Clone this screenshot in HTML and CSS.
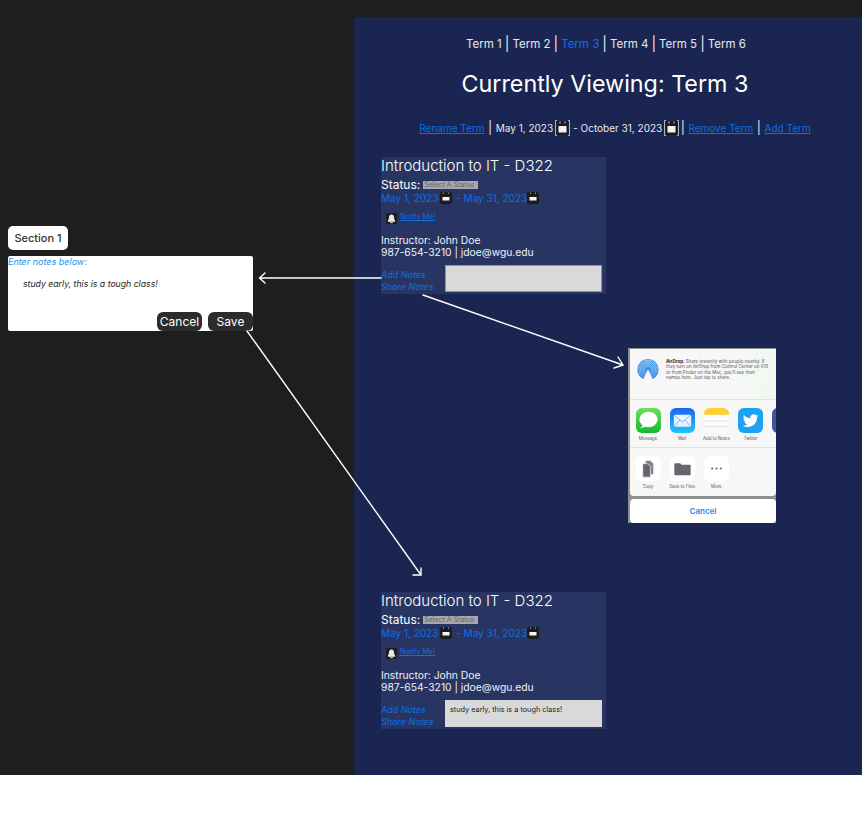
FILE: index.html
```html
<!DOCTYPE html>
<html lang="en">
<head>
<meta charset="utf-8">
<title>Term planner wireframes</title>
<link rel="stylesheet" href="styles.css">
</head>
<body>
<svg width="0" height="0" class="defs">
  <symbol id="cal" viewBox="0 0 15 16">
    <path d="M2 .5H.5v15H2M13 .5h1.500v15H13" fill="none" stroke="#d8dbe6" stroke-width=".8"/>
    <rect x="1.500" y="1" width="12" height="14" rx="1.500" fill="#1c1c1c"/>
    <rect x="3.500" y="6" width="8" height="6.500" fill="#f2f2f2"/>
    <path d="M5 1.500v2M10 1.500v2" stroke="#cfcfcf" stroke-width="1"/>
  </symbol>
  <symbol id="calsm" viewBox="0 0 12 12">
    <rect width="12" height="12" rx="2" fill="#1c1c1c"/>
    <rect x="2.500" y="5" width="7" height="3.500" fill="#f4f4f4"/>
    <path d="M3.500 .5v1.500M8.500 .5v1.500" stroke="#aaa" stroke-width=".8"/>
  </symbol>
  <symbol id="bell" viewBox="0 0 12 12">
    <rect width="12" height="12" rx="1.500" fill="#1c1c1c"/>
    <path d="M6 1.500c-2 0-2.800 1.500-2.800 3.300 0 2-.9 2.700-1.200 3.700v1h8v-1c-.3-1-1.200-1.700-1.200-3.700C8.800 3 8 1.500 6 1.500z" fill="#e9e9e9"/>
    <rect x="4.500" y="10" width="3" height="1" fill="#e9e9e9"/>
  </symbol>
</svg>

<main class="canvas">
  <section class="notes">
    <div class="section-tag">Section 1</div>
    <div class="notes-box">
      <p class="notes-label">Enter notes below:</p>
      <p class="notes-text">study early, this is a tough class!</p>
      <div class="notes-actions">
        <button class="dark-btn">Cancel</button>
        <button class="dark-btn">Save</button>
      </div>
    </div>
  </section>

  <section class="frame">
    <nav class="term-nav">
      <span>Term 1</span><i>|</i><span>Term 2</span><i>|</i><span class="active">Term 3</span><i>|</i><span>Term 4</span><i>|</i><span>Term 5</span><i>|</i><span>Term 6</span>
    </nav>
    <h1 class="viewing">Currently Viewing: Term 3</h1>
    <div class="term-meta">
      <a href="#">Rename Term</a><i>|</i><span>May 1, 2023</span><svg class="cal"><use href="#cal"/></svg><span class="dash">- October 31, 2023</span><svg class="cal"><use href="#cal"/></svg><i>|</i><a href="#">Remove Term</a><i>|</i><a href="#">Add Term</a>
    </div>

    <article class="card card-top">
      <h2>Introduction to IT - D322</h2>
      <div class="status">Status: <span class="select">Select A Status</span></div>
      <div class="dates">May 1, 2023<svg class="calsm"><use href="#calsm"/></svg> - May 31, 2023<svg class="calsm"><use href="#calsm"/></svg></div>
      <div class="notify"><svg class="bell"><use href="#bell"/></svg><a href="#">Notify Me!</a></div>
      <div class="instructor">Instructor: John Doe<br>987-654-3210 | jdoe@wgu.edu</div>
      <div class="card-foot">
        <div class="foot-links"><em>Add Notes</em><em>Share Notes</em></div>
        <div class="note-area"></div>
      </div>
    </article>

    <article class="card card-bottom">
      <h2>Introduction to IT - D322</h2>
      <div class="status">Status: <span class="select">Select A Status</span></div>
      <div class="dates">May 1, 2023<svg class="calsm"><use href="#calsm"/></svg> - May 31, 2023<svg class="calsm"><use href="#calsm"/></svg></div>
      <div class="notify"><svg class="bell"><use href="#bell"/></svg><a href="#">Notify Me!</a></div>
      <div class="instructor">Instructor: John Doe<br>987-654-3210 | jdoe@wgu.edu</div>
      <div class="card-foot">
        <div class="foot-links"><em>Add Notes</em><em>Share Notes</em></div>
        <div class="note-area flush">study early, this is a tough class!</div>
      </div>
    </article>
  </section>

  <aside class="share">
    <div class="sheet">
      <div class="airdrop">
        <svg class="air-icon" viewBox="0 0 26 26">
          <defs>
            <linearGradient id="ag" x1="0" y1="0" x2="0" y2="1"><stop offset="0" stop-color="#4aa8f0"/><stop offset="1" stop-color="#1f74dc"/></linearGradient>
          </defs>
          <circle cx="13" cy="12.500" r="12.500" fill="url(#ag)"/>
          <g fill="none" stroke="#dff0fd" stroke-width=".5">
            <circle cx="13" cy="12.500" r="10.800"/>
            <circle cx="13" cy="12.500" r="9.100"/>
            <circle cx="13" cy="12.500" r="7.400"/>
            <circle cx="13" cy="12.500" r="5.700"/>
            <circle cx="13" cy="12.500" r="4"/>
          </g>
          <path d="M13 12L6.500 26h13z" fill="#f7f7f7"/>
        </svg>
        <p class="air-copy"><b>AirDrop.</b> Share instantly with people nearby. If<br>they turn on AirDrop from Control Center on iOS<br>or from Finder on the Mac, you'll see their<br>names here. Just tap to share.</p>
      </div>
      <div class="apps">
        <div class="app"><svg viewBox="0 0 26 26"><defs><linearGradient id="mg" x1="0" y1="0" x2="0" y2="1"><stop offset="0" stop-color="#6be05f"/><stop offset="1" stop-color="#14b82b"/></linearGradient></defs><rect width="26" height="26" rx="6" fill="url(#mg)"/><ellipse cx="13" cy="12" rx="9.500" ry="8" fill="#fff"/><path d="M7 17c0 2-1 3-2.500 3.700 2.500.2 4.500-.7 6-2.200z" fill="#fff"/></svg><span>Message</span></div>
        <div class="app"><svg viewBox="0 0 26 26"><defs><linearGradient id="ml" x1="0" y1="0" x2="0" y2="1"><stop offset="0" stop-color="#1d62f0"/><stop offset="1" stop-color="#1ac8fc"/></linearGradient></defs><rect width="26" height="26" rx="6" fill="url(#ml)"/><rect x="4" y="7" width="18" height="12.500" rx="1.500" fill="#e8f3fe"/><path d="M4.500 7.500L13 14.500l8.500-7M4.500 19l6-6.500M21.500 19l-6-6.500" fill="none" stroke="#5ba4f2" stroke-width=".8"/></svg><span>Mail</span></div>
        <div class="app"><svg viewBox="0 0 26 26"><rect width="26" height="26" rx="6" fill="#fbfbfb"/><path d="M0 7V6a6 6 0 0 1 6-6h14a6 6 0 0 1 6 6v1z" fill="#fdd02f"/><path d="M0 13.500h26M0 19.500h26" stroke="#d9d9d9" stroke-width=".8"/></svg><span>Add to Notes</span></div>
        <div class="app"><svg viewBox="0 0 26 26"><rect width="26" height="26" rx="6" fill="#1da1f2"/><path d="M21 8.100c-.6.300-1.200.4-1.900.5.700-.4 1.200-1 1.400-1.800-.6.400-1.300.6-2.100.8a3.300 3.300 0 0 0-5.600 3c-2.700-.1-5.100-1.400-6.700-3.400-.9 1.500-.4 3.400 1 4.400-.5 0-1-.2-1.500-.4 0 1.600 1.100 2.900 2.600 3.200-.5.100-1 .2-1.500.1.400 1.300 1.600 2.200 3.100 2.300-1.400 1.100-3.200 1.600-4.900 1.400 5.900 3.800 14.900.9 15-9 .7-.4 1.300-1 1.600-1.100z" fill="#fff"/></svg><span>Twitter</span></div>
        <div class="app"><svg viewBox="0 0 26 26"><rect width="26" height="26" rx="6" fill="#3b5998"/></svg><span>&nbsp;</span></div>
      </div>
      <div class="actions">
        <div class="app"><svg viewBox="0 0 26 26"><rect width="26" height="26" rx="6" fill="#fff"/><path d="M10 5h5l3 3v11h-8z" fill="#85858c"/><path d="M7 8h5l3 3v11H7z" fill="#66666e" stroke="#fff" stroke-width=".6"/></svg><span>Copy</span></div>
        <div class="app"><svg viewBox="0 0 26 26"><rect width="26" height="26" rx="6" fill="#fff"/><path d="M4.500 8.500a1 1 0 0 1 1-1h5l1.500 1.500h8.500a1 1 0 0 1 1 1v9a1 1 0 0 1-1 1h-15a1 1 0 0 1-1-1z" fill="#66666e"/></svg><span>Save to Files</span></div>
        <div class="app"><svg viewBox="0 0 26 26"><rect width="26" height="26" rx="6" fill="#fff"/><circle cx="8.500" cy="13" r="1.100" fill="#666"/><circle cx="13" cy="13" r="1.100" fill="#666"/><circle cx="17.500" cy="13" r="1.100" fill="#666"/></svg><span>More</span></div>
      </div>
    </div>
    <div class="sheet-cancel">Cancel</div>
  </aside>

  <svg class="arrows" viewBox="0 0 862 775" width="862" height="775">
    <g fill="none" stroke="#fff" stroke-width="1.400" stroke-linecap="round">
      <path d="M381 278H260M265 273l-5.500 5 5.500 5"/>
      <path d="M423 295L623 365M614 368l9-3-5-8"/>
      <path d="M247 331L421 575M413 575h8v-7"/>
    </g>
  </svg>
</main>
</body>
</html>
```

FILE: styles.css
```css
* { box-sizing: border-box; }
html, body { margin: 0; padding: 0; background: #fff; }
body { font-family: Inter, "Liberation Sans", sans-serif; color: #fff; }
.defs { position: absolute; }
a { color: #0d6fe0; }
p, h1, h2 { margin: 0; font-weight: 400; }
i { font-style: normal; }

.canvas { position: relative; width: 862px; height: 775px; background: #1e1e1e; overflow: hidden; }
.arrows { position: absolute; left: 0; top: 0; pointer-events: none; }

/* Notes dialog */
.notes { position: absolute; left: 8px; top: 226px; width: 245px; }
.section-tag { width: 60px; height: 24px; background: #fff; color: #333; border-radius: 5px; font-size: 11px; font-weight: 500; line-height: 24px; text-align: center; margin-bottom: 6px; }
.notes-box { position: relative; height: 75px; background: #fff; border-radius: 2px; }
.notes-label { font-size: 9px; line-height: 11px; font-style: italic; color: #1f8fe8; }
.notes-text { font-size: 8.700px; line-height: 12px; font-style: italic; color: #222; margin: 11px 0 0 15px; }
.notes-actions { position: absolute; right: 0; bottom: 0; display: flex; gap: 6px; }
.dark-btn { height: 19px; padding: 0; border: 0; border-radius: 6px; background: #2c2c2c; color: #fff; font: 400 12px Inter, "Liberation Sans", sans-serif; width: 45px; }

/* Term frame */
.frame { position: absolute; left: 354px; top: 17px; width: 508px; height: 758px; background: #1a2651; }
.term-nav { margin-top: 19px; padding-right: 4px; display: flex; justify-content: center; align-items: center; gap: 3px; font-size: 11.500px; line-height: 16px; color: #e6e8ef; }
.term-nav i { font-size: 14px; }
.active { color: #0d6fe0; }
.viewing { margin-top: 17px; padding-right: 6px; text-align: center; font-size: 23.300px; line-height: 29px; color: #fff; }
.term-meta { margin: 22px 0 0 14px; display: flex; justify-content: center; align-items: center; font-size: 10px; line-height: 16px; color: #e6e8ef; height: 16px; }
.term-meta i { font-size: 12.500px; margin: 0 3.500px; }
.term-meta .cal + i { margin-left: 1.500px; }
.dash { margin-left: 3px; }
.cal { width: 15px; height: 16px; margin-left: 2px; }

/* Course cards */
.card { position: absolute; left: 27px; width: 225px; height: 137px; background: #283563; }
.card-top { top: 140px; }
.card-bottom { top: 575px; }
.card h2 { font-size: 15px; line-height: 18px; font-weight: 300; color: #fff; }
.status { font-size: 12px; line-height: 14px; color: #fff; margin-top: 3px; display: flex; align-items: center; gap: 3px; }
.select { background: #a8a8a8; color: #666; font-size: 7px; line-height: 8px; height: 8px; padding: 0 1px; width: 55px; white-space: nowrap; overflow: hidden; }
.dates { font-size: 10px; line-height: 12px; color: #0d6fe0; display: flex; align-items: center; white-space: pre; }
.calsm { width: 12px; height: 12px; margin-left: 2px; margin-right: 1px; }
.dates .calsm:last-of-type { margin-left: 0; margin-right: 0; }
.notify { display: flex; align-items: flex-start; margin: 7px 0 0 5px; height: 17px; font-size: 7.200px; line-height: 11px; }
.bell { width: 11px; height: 11px; margin: 2px 3px 0 0; }
.instructor { margin-top: 6px; font-size: 10.300px; line-height: 12px; color: #f0f1f5; }
.card-foot { display: flex; margin-top: 7px; }
.foot-links { width: 64px; display: flex; flex-direction: column; font-size: 9px; line-height: 12px; color: #0d6fe0; padding-top: 4px; }
.note-area { width: 157px; height: 27px; background: #d9d9d9; border: 1px solid #8e93a8; font-size: 7.300px; line-height: 10px; color: #222; }
.note-area.flush { border: 0; padding: 5px 0 0 5px; }

/* iOS share sheet */
.share { position: absolute; left: 628px; top: 348px; width: 148px; height: 175px; background: #8f9092; padding: 1px 0 0 2px; }
.sheet { height: 147px; background: #f7f7f7; border-radius: 4px; }
.airdrop { height: 51px; padding: 10px 0 0 7px; display: flex; gap: 7px; border-bottom: 1px solid #e2e2e2; background: linear-gradient(100deg, #f7f7f7 70%, #eff8ef); }
.air-icon { width: 22px; height: 22px; flex: none; }
.air-copy { font-size: 4.500px; line-height: 5.400px; color: #555; white-space: nowrap; }
.air-copy b { color: #222; }
.apps, .actions { display: flex; gap: 9.200px; padding: 8px 0 0 5.500px; overflow: hidden; color: #555; font-size: 4.300px; }
.apps { height: 48px; border-bottom: 1px solid #e2e2e2; }
.actions { height: 47px; }
.app { width: 25px; flex: none; display: flex; flex-direction: column; align-items: center; gap: 3px; white-space: nowrap; }
.app svg { width: 25px; height: 25px; }
.sheet-cancel { margin-top: 3px; height: 24px; background: #fff; border-radius: 4px; color: #2a8ae8; font-size: 8px; font-weight: 600; line-height: 24px; text-align: center; }
```
